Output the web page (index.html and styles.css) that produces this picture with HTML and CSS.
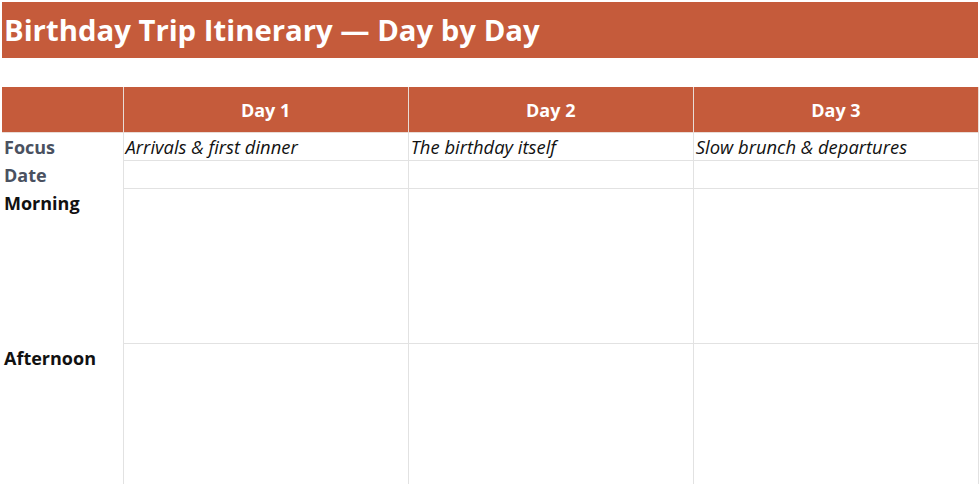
FILE: index.html
```html
<!DOCTYPE html>
<html>
<head>
<meta charset="utf-8">
<link rel="stylesheet" href="styles.css">
</head>
<body>
<h1 class="title">Birthday Trip Itinerary — Day by Day</h1>
<div class="spacer"></div>
<table class="grid">
  <colgroup>
    <col class="c-label">
    <col class="c-day">
    <col class="c-day">
    <col class="c-day">
  </colgroup>
  <thead>
    <tr class="head">
      <th class="corner"></th>
      <th>Day 1</th>
      <th>Day 2</th>
      <th>Day 3</th>
    </tr>
  </thead>
  <tbody>
    <tr class="short">
      <th class="label muted">Focus</th>
      <td class="focus">Arrivals &amp; first dinner</td>
      <td class="focus">The birthday itself</td>
      <td class="focus">Slow brunch &amp; departures</td>
    </tr>
    <tr class="short">
      <th class="label muted">Date</th>
      <td></td><td></td><td></td>
    </tr>
    <tr class="tall">
      <th class="label">Morning</th>
      <td></td><td></td><td></td>
    </tr>
    <tr class="tall">
      <th class="label">Afternoon</th>
      <td></td><td></td><td></td>
    </tr>
  </tbody>
</table>
</body>
</html>
```
FILE: styles.css
```css
html, body {
  margin: 0;
  padding: 0;
  background: #ffffff;
}
body {
  padding: 2px;
  font-family: "Open Sans", "Noto Sans", "Liberation Sans", sans-serif;
  color: #111;
}
.title {
  margin: 0;
  width: 976px;
  height: 56px;
  box-sizing: border-box;
  background: #c55b3b;
  color: #ffffff;
  font-size: 29.3px;
  font-weight: 700;
  line-height: 56px;
  padding-left: 2px;
  white-space: nowrap;
}
.spacer {
  height: 29px;
}
.grid {
  border-collapse: collapse;
  table-layout: fixed;
  width: 977px;
}
.c-label { width: 121px; }
.c-day { width: 285px; }
.head th {
  height: 45px;
  padding: 0;
  background: #c55b3b;
  color: #ffffff;
  font-size: 18px;
  font-weight: 700;
  text-align: center;
  border: 1px solid #e9dcd6;
  border-top: none;
}
.head th.corner {
  border-left: none;
}
tbody td {
  border: 1px solid #e2e2e2;
  padding: 0 2px;
  vertical-align: middle;
}
tbody tr.short td {
  height: 27px;
}
tbody tr.tall td {
  height: 154px;
}
.label {
  text-align: left;
  vertical-align: top;
  padding: 1px 2px 0 2px;
  font-size: 18px;
  font-weight: 700;
  color: #111111;
  border: none;
  border-right: 1px solid #e2e2e2;
  line-height: 24px;
}
tr.tall .label {
  padding-top: 2px;
}
.label.muted {
  color: #4a5160;
  vertical-align: middle;
  padding-top: 0;
}
.focus {
  font-style: italic;
  font-size: 18.4px;
  line-height: 24px;
  color: #111111;
}
```
